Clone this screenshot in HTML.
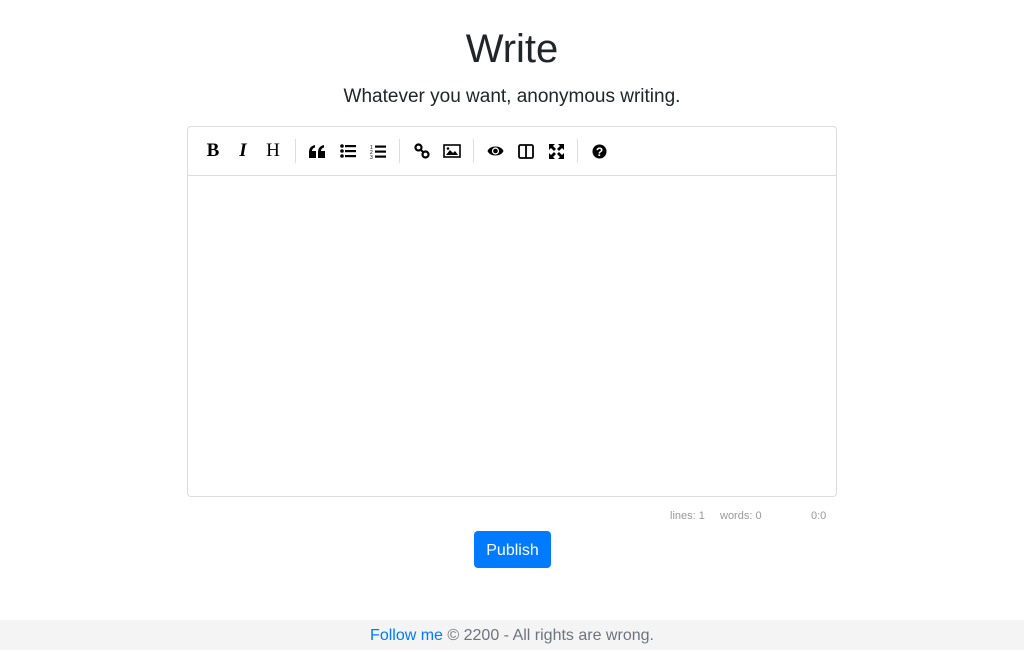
<!DOCTYPE html>
<html><head><meta charset="utf-8"><style>
body{margin:0;width:1024px;height:650px;background:#fff;font-family:"Liberation Sans",sans-serif;position:relative;overflow:hidden;color:#212529}
h1{position:absolute;top:25px;left:0;width:1024px;text-align:center;margin:0;font-weight:300;font-size:40px;line-height:48px}
.sub{position:absolute;top:85px;left:0;width:1024px;text-align:center;font-size:19px;font-weight:300;line-height:24px}
.ed{position:absolute;left:187px;top:126px;width:648px;height:369px;border:1px solid #ddd;border-radius:4px}
.tb{position:absolute;left:0;top:0;width:648px;height:48px;border-bottom:1px solid #ddd}
.ic{position:absolute;top:14px;width:20px;height:20px;display:flex;align-items:center;justify-content:center;color:#000}
.sep{position:absolute;top:12px;width:1px;height:24px;background:#ddd}
.st{position:absolute;top:510px;font-size:11px;color:#999}
.btn{position:absolute;left:474px;top:531px;width:77px;height:37px;background:#007bff;border-radius:4px;color:#fff;font-size:16px;line-height:39px;text-align:center}
.ft{position:absolute;left:0;top:620px;width:1024px;height:30px;background:#f4f4f4;text-align:center;font-size:16px;line-height:32px;color:#6c757d}
.ft span{color:#007bff}
</style></head><body>
<h1>Write</h1>
<div class="sub">Whatever you want, anonymous writing.</div>
<div class="ed"><div class="tb">
<div class="ic" style="left:15px;font:bold 19px 'Liberation Serif',serif">B</div>
<div class="ic" style="left:45px;font:italic bold 19px 'Liberation Serif',serif">I</div>
<div class="ic" style="left:75px;font:19px 'Liberation Serif',serif">H</div>
<div class="sep" style="left:107px"></div>
<div class="ic" style="left:119px"><svg width="16" height="13"><path d="M0 13V7.5C0 3 2 1 6 0v2.5C4 3 3 4.5 3 6h4v7zM9 13V7.5C9 3 11 1 15 0v2.5C13 3 12 4.5 12 6h4v7z"/></svg></div>
<div class="ic" style="left:150px"><svg width="16" height="14"><circle cx="2" cy="2" r="1.8"/><circle cx="2" cy="7" r="1.8"/><circle cx="2" cy="12" r="1.8"/><rect x="5" y="1" width="11" height="2.2"/><rect x="5" y="6" width="11" height="2.2"/><rect x="5" y="11" width="11" height="2.2"/></svg></div>
<div class="ic" style="left:180px"><svg width="16" height="15"><text x="0" y="5" font-size="5">1</text><text x="0" y="10" font-size="5">2</text><text x="0" y="15" font-size="5">3</text><rect x="5" y="1.5" width="11" height="2.2"/><rect x="5" y="6.5" width="11" height="2.2"/><rect x="5" y="11.5" width="11" height="2.2"/></svg></div>
<div class="sep" style="left:211px"></div>
<div class="ic" style="left:224px"><svg width="16" height="16"><circle cx="4.5" cy="4.5" r="3" fill="none" stroke="#000" stroke-width="2.2"/><circle cx="11.5" cy="11.5" r="3" fill="none" stroke="#000" stroke-width="2.2"/><line x1="6" y1="6" x2="10" y2="10" stroke="#000" stroke-width="2"/></svg></div>
<div class="ic" style="left:254px"><svg width="18" height="14"><rect x="1" y="1" width="16" height="12" fill="none" stroke="#000" stroke-width="1.6"/><path d="M3 11l4-5 3 3 2-2 3 4z"/><circle cx="5" cy="4.5" r="1.3"/></svg></div>
<div class="sep" style="left:285px"></div>
<div class="ic" style="left:297px"><svg width="17" height="12"><path d="M0.5 6C3 0 14 0 16.5 6C14 12 3 12 0.5 6z"/><circle cx="8.5" cy="6" r="3.6" fill="#fff"/><circle cx="8.5" cy="6" r="2.3"/></svg></div>
<div class="ic" style="left:328px"><svg width="16" height="15"><rect x="1" y="1" width="14" height="13" rx="1.5" fill="none" stroke="#000" stroke-width="1.8"/><line x1="8" y1="1" x2="8" y2="14" stroke="#000" stroke-width="1.8"/></svg></div>
<div class="ic" style="left:358px"><svg width="15" height="15"><path d="M0 0h6l-2 2 3 3-2 2-3-3-2 2zM15 0v6l-2-2-3 3-2-2 3-3-2-2zM0 15v-6l2 2 3-3 2 2-3 3 2 2zM15 15h-6l2-2-3-3 2-2 3 3 2-2z"/></svg></div>
<div class="sep" style="left:389px"></div>
<div class="ic" style="left:401px"><svg width="15" height="15"><circle cx="7.5" cy="7.5" r="7"/><text x="7.5" y="12" font-size="12" font-weight="bold" fill="#fff" text-anchor="middle" font-family="Liberation Sans">?</text></svg></div>
</div></div>
<div class="st" style="left:670px">lines: 1</div>
<div class="st" style="left:720px">words: 0</div>
<div class="st" style="left:811px">0:0</div>
<div class="btn">Publish</div>
<div class="ft"><span>Follow me</span> © 2200 - All rights are wrong.</div>
</body></html>
